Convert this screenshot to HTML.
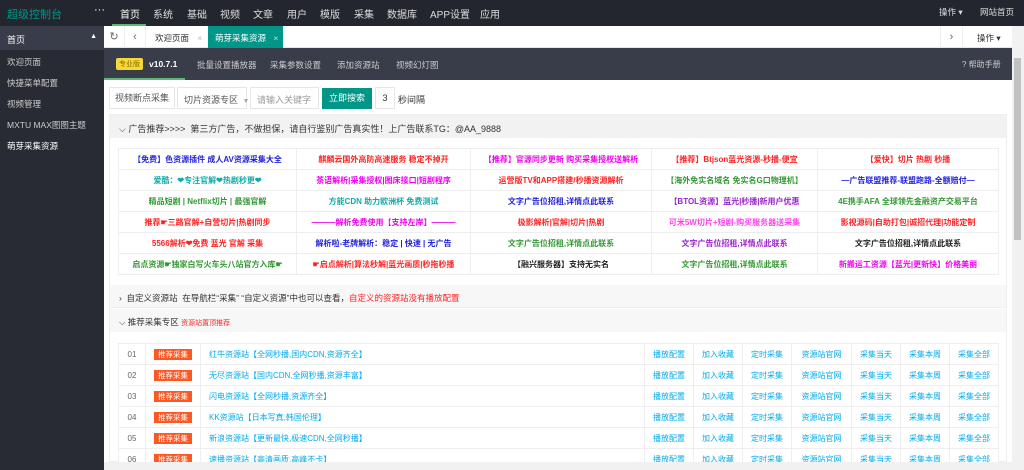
<!DOCTYPE html>
<html><head><meta charset="utf-8"><style>
*{margin:0;padding:0;box-sizing:border-box}
body{width:1024px;height:470px;overflow:hidden;font-family:"Liberation Sans","Noto Sans CJK SC",sans-serif;font-size:9px;background:#f2f2f2;position:relative;color:#333}
.abs{position:absolute;white-space:nowrap}
#top{left:0;top:0;width:1024px;height:26px;background:#23262e}
#top .logo{left:7px;top:6px;color:#009688;font-size:11px}
#top .nav span{position:absolute;top:6px;color:#ddd;font-size:10px}
#side{left:0;top:26px;width:104px;height:444px;background:#282b33}
#side .h{height:24px;background:#393d49;color:#fff;padding:7px 7px;font-size:9px}
#side .i{height:21px;color:#ccc;padding:6px 7px;font-size:8.5px}
#tabs{left:104px;top:26px;width:908px;height:22px;background:#fff;border-bottom:1px solid #e6e6e6}
#sub{left:104px;top:48px;width:908px;height:32px;background:#393d49}
#sub span{position:absolute;top:11px;color:#ccc;font-size:8.5px}
#main{left:104px;top:80px;width:908px;height:382px;background:#fff}
table{border-collapse:collapse;position:absolute;background:#fff}
td{border:1px solid #eee;text-align:center;height:21px;font-size:8px;font-weight:bold;white-space:nowrap;overflow:hidden}
.lt td{font-weight:normal;color:#01aaed}
.tag{background:#ff5722;color:#fff;padding:1px 4px;font-size:7.5px}
</style></head><body>
<div id="top" class="abs">
<div class="abs logo">超级控制台</div>
<div class="abs" style="left:94px;top:4px;color:#fff;font-size:11px">···</div>
<div class="nav"><span style="left:120px;color:#fff">首页</span><span style="left:153px">系统</span><span style="left:187px">基础</span><span style="left:220px">视频</span><span style="left:253px">文章</span><span style="left:287px">用户</span><span style="left:320px">模版</span><span style="left:354px">采集</span><span style="left:387px">数据库</span><span style="left:430px">APP设置</span><span style="left:480px">应用</span><span style="left:939px;font-size:8.5px">操作 ▾</span><span style="left:980px;font-size:8.5px">网站首页</span></div>
<div class="abs" style="left:112px;top:24px;width:34px;height:2px;background:#5fb878"></div>
</div>
<div id="side" class="abs">
<div class="h">首页<span style="float:right;font-size:7px">▲</span></div>
<div class="i">欢迎页面</div><div class="i">快捷菜单配置</div><div class="i">视频管理</div><div class="i">MXTU MAX图图主题</div><div class="i" style="color:#fff">萌芽采集资源</div>
</div>
<div id="tabs" class="abs">
<div class="abs" style="left:0;top:0;width:21px;height:22px;border-right:1px solid #eee;text-align:center;line-height:22px;font-size:11px;color:#666">↻</div>
<div class="abs" style="left:21px;top:0;width:21px;height:22px;border-right:1px solid #eee;text-align:center;line-height:22px;font-size:11px;color:#666">‹</div>
<div class="abs" style="left:51px;top:6px;color:#333;font-size:8.5px">欢迎页面 <span style="color:#bbb;margin-left:6px">×</span></div>
<div class="abs" style="left:104px;top:0;width:75px;height:22px;background:#009688;color:#fff;padding:6px 0 0 7px;font-size:8.5px">萌芽采集资源 <span style="margin-left:5px;color:#cde">×</span></div>
<div class="abs" style="left:836px;top:0;width:22px;height:22px;border-left:1px solid #eee;text-align:center;line-height:22px;color:#666;font-size:11px">›</div>
<div class="abs" style="left:858px;top:0;width:50px;height:22px;border-left:1px solid #eee;padding:6px 0 0 14px;font-size:8.5px">操作 ▾</div>
</div>
<div id="sub" class="abs">
<div class="abs" style="left:12px;top:10px;background:#f5d93a;color:#8a6d00;font-size:7px;padding:1px 3px;border-radius:2px">专业版</div>
<span style="left:45px;color:#fff;font-weight:bold">v10.7.1</span>
<div class="abs" style="left:0;top:30px;width:81px;height:2px;background:#5fb878"></div>
<span style="left:93px">批量设置播放器</span><span style="left:166px">采集参数设置</span><span style="left:233px">添加资源站</span><span style="left:292px">视频幻灯图</span>
<span style="left:858px;font-size:8px">? 帮助手册</span>
</div>
<div id="main" class="abs">
<div class="abs" style="left:5px;top:7px;width:66px;height:22px;border:1px solid #e6e6e6;text-align:center;line-height:20px;color:#555">视频断点采集</div>
<div class="abs" style="left:73px;top:7px;width:70px;height:22px;border:1px solid #e6e6e6;padding:5px 0 0 6px;color:#555">切片资源专区 <span style="color:#aaa;margin-left:2px;font-size:7px">▼</span></div>
<div class="abs" style="left:146px;top:7px;width:69px;height:22px;border:1px solid #e6e6e6;padding:5px 0 0 6px;color:#999">请输入关键字</div>
<div class="abs" style="left:218px;top:8px;width:50px;height:21px;background:#009688;color:#fff;text-align:center;line-height:21px">立即搜索</div>
<div class="abs" style="left:271px;top:7px;width:20px;height:22px;border:1px solid #e6e6e6;text-align:center;line-height:20px">3</div>
<div class="abs" style="left:294px;top:13px">秒间隔</div>
<div class="abs" style="left:5px;top:34px;width:898px;height:348px;border:1px solid #eee;background:#fff"></div>
<div class="abs" style="left:6px;top:35px;width:896px;height:23px;background:#f2f2f2;padding:7px 0 0 9px">⌵ 广告推荐&gt;&gt;&gt;&gt; &nbsp;第三方广告，不做担保，请自行鉴别广告真实性！上广告联系TG：@AA_9888</div>
<table style="left:14px;top:68px;width:881px">
<tr><td style="width:178px;color:#2222dd">【免费】色资源插件 成人AV资源采集大全</td><td style="width:174px;color:#f22">麒麟云国外高防高速服务 稳定不掉开</td><td style="width:181px;color:#e0e">【推荐】官源同步更新 购买采集授权送解析</td><td style="width:166px;color:#f22">【推荐】Btjson蓝光资源-秒播-便宜</td><td style="color:#f22">【爱快】切片 热剧 秒播</td></tr>
<tr><td style="color:#1aa">爱酷：❤专注官解❤热剧秒更❤</td><td style="color:#e0e">茶语解析|采集授权|图床接口|短剧程序</td><td style="color:#f22">运营版TV和APP搭建/秒播资源解析</td><td style="color:#393">【海外免实名域名 免实名G口物理机】</td><td style="color:#22d">—广告联盟推荐-联盟跑路-全额赔付—</td></tr>
<tr><td style="color:#393">精品短剧 | Netflix切片 | 最强官解</td><td style="color:#1aa">方能CDN 助力欧洲杯 免费测试</td><td style="color:#22d">文字广告位招租,详情点此联系</td><td style="color:#92c">【BTOL资源】蓝光|秒播|新用户优惠</td><td style="color:#393">4E携手AFA 全球领先金融资产交易平台</td></tr>
<tr><td style="color:#f22">推荐☛三路官解+自营切片|热剧同步</td><td style="color:#e0e">———解析免费使用【支持左岸】———</td><td style="color:#f22">极影解析|官解|切片|热剧</td><td style="color:#f4e">可米5W切片+短剧-购买服务器送采集</td><td style="color:#f22">影视源码|自助打包|诚招代理|功能定制</td></tr>
<tr><td style="color:#f22">5566解析❤免费 蓝光 官解 采集</td><td style="color:#22d">解析啦-老牌解析：稳定 | 快速 | 无广告</td><td style="color:#393">文字广告位招租,详情点此联系</td><td style="color:#92c">文字广告位招租,详情点此联系</td><td style="color:#222">文字广告位招租,详情点此联系</td></tr>
<tr><td style="color:#393">启点资源☛独家白写火车头八站官方入库☛</td><td style="color:#f22">☛启点解析|算法秒解|蓝光画质|秒拖秒播</td><td style="color:#222">【融兴服务器】支持无实名</td><td style="color:#393">文字广告位招租,详情点此联系</td><td style="color:#e0e">新搬运工资源【蓝光|更新快】价格美丽</td></tr>
</table>
<div class="abs" style="left:6px;top:205px;width:896px;height:23px;background:#f7f7f7;border-bottom:1px solid #eee;padding:7px 0 0 9px;font-size:8.5px">› &nbsp;自定义资源站 &nbsp;在导航栏“采集” “自定义资源”中也可以查看，<span style="color:#f22">自定义的资源站没有播放配置</span></div>
<div class="abs" style="left:6px;top:229px;width:896px;height:23px;background:#f7f7f7;padding:7px 0 0 9px;font-size:8.5px">⌵ 推荐采集专区 <span style="color:#f22;font-size:7px">资源站置顶推荐</span></div>
<table class="lt" style="left:14px;top:263px;width:881px">
<tr><td style="width:27px;color:#666">01</td><td style="width:55px"><span class="tag">推荐采集</span></td><td style="width:444px;text-align:left;padding-left:8px">红牛资源站【全网秒播,国内CDN,资源齐全】</td><td style="width:49px">播放配置</td><td style="width:49px">加入收藏</td><td style="width:49px">定时采集</td><td style="width:60px">资源站官网</td><td style="width:49px">采集当天</td><td style="width:49px">采集本周</td><td>采集全部</td></tr>
<tr><td style="color:#666">02</td><td><span class="tag">推荐采集</span></td><td style="text-align:left;padding-left:8px">无尽资源站【国内CDN,全网秒播,资源丰富】</td><td>播放配置</td><td>加入收藏</td><td>定时采集</td><td>资源站官网</td><td>采集当天</td><td>采集本周</td><td>采集全部</td></tr>
<tr><td style="color:#666">03</td><td><span class="tag">推荐采集</span></td><td style="text-align:left;padding-left:8px">闪电资源站【全网秒播,资源齐全】</td><td>播放配置</td><td>加入收藏</td><td>定时采集</td><td>资源站官网</td><td>采集当天</td><td>采集本周</td><td>采集全部</td></tr>
<tr><td style="color:#666">04</td><td><span class="tag">推荐采集</span></td><td style="text-align:left;padding-left:8px">KK资源站【日本写真,韩国伦理】</td><td>播放配置</td><td>加入收藏</td><td>定时采集</td><td>资源站官网</td><td>采集当天</td><td>采集本周</td><td>采集全部</td></tr>
<tr><td style="color:#666">05</td><td><span class="tag">推荐采集</span></td><td style="text-align:left;padding-left:8px">新浪资源站【更新最快,极速CDN,全网秒播】</td><td>播放配置</td><td>加入收藏</td><td>定时采集</td><td>资源站官网</td><td>采集当天</td><td>采集本周</td><td>采集全部</td></tr>
<tr><td style="color:#666">06</td><td><span class="tag">推荐采集</span></td><td style="text-align:left;padding-left:8px">速播资源站【高清画质,高峰不卡】</td><td>播放配置</td><td>加入收藏</td><td>定时采集</td><td>资源站官网</td><td>采集当天</td><td>采集本周</td><td>采集全部</td></tr>
</table>
</div>
<div class="abs" style="left:1012px;top:48px;width:12px;height:414px;background:#f1f1f1"><div class="abs" style="left:2px;top:10px;width:7px;height:182px;background:#c1c1c1"></div></div>
<div class="abs" style="left:104px;top:462px;width:920px;height:8px;background:#f1f1f1"></div>
</body></html>
